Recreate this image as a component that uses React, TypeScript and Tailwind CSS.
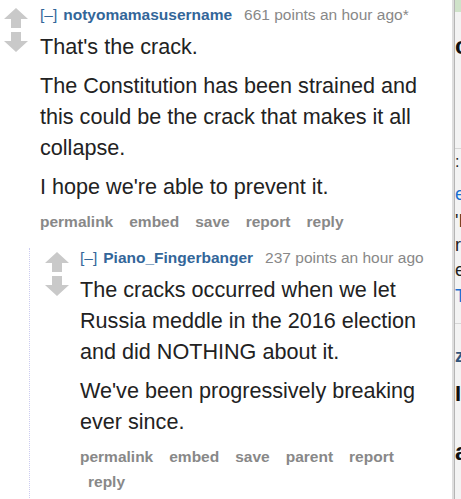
import React from 'react'

const font = { fontFamily: '"Liberation Sans", Arial, sans-serif' }

const Arrows: React.FC = () => (
  <div className="flex flex-col gap-[4px]">
    <svg width="24" height="20" viewBox="0 0 24 20">
      <path d="M12 0 L24 11 L17 11 L17 20 L7 20 L7 11 L0 11 Z" fill="#c9c9c9" />
    </svg>
    <svg width="24" height="20" viewBox="0 0 24 20">
      <path d="M12 20 L24 9 L17 9 L17 0 L7 0 L7 9 L0 9 Z" fill="#c9c9c9" />
    </svg>
  </div>
)

interface CommentProps {
  author: string
  meta: string
  paragraphs: string[]
  buttons: string[]
}

const CommentBody: React.FC<CommentProps> = ({ author, meta, paragraphs, buttons }) => (
  <div className="flex-1 min-w-0">
    <div className="text-[15.5px] leading-[20px] whitespace-nowrap">
      <span className="text-[#336699]">[–]</span>
      <span className="ml-[6px] font-bold text-[#336699]">{author}</span>
      <span className="ml-[12px] text-[#888888]">{meta}</span>
    </div>
    <div className="mt-[6px] text-[21.6px] leading-[31px] text-[#222222]">
      {paragraphs.map((p) => (
        <p key={p} className="mb-[8px] last:mb-0">
          {p}
        </p>
      ))}
    </div>
    <ul className="mt-[7px] flex flex-wrap text-[15.5px] leading-[25px] font-bold text-[#888888]">
      {buttons.map((b, i) => (
        <li key={b} className={i === 0 ? 'pr-[8px]' : 'px-[8px]'}>
          {b}
        </li>
      ))}
    </ul>
  </div>
)

export default function App() {
  return (
    <div className="flex w-[461px] h-[499px] overflow-hidden bg-white" style={font}>
      <div className="w-[452px] shrink-0 pt-[5px] pr-[14px]">
        <div className="flex">
          <div className="w-[40px] shrink-0 pl-[4px] pt-[3px]">
            <Arrows />
          </div>
          <CommentBody
            author="notyomamasusername"
            meta="661 points an hour ago*"
            paragraphs={[
              "That's the crack.",
              'The Constitution has been strained and this could be the crack that makes it all collapse.',
              "I hope we're able to prevent it.",
            ]}
            buttons={['permalink', 'embed', 'save', 'report', 'reply']}
          />
        </div>
        <div className="ml-[29px] mt-[14px] border-l border-dotted border-[#ccccf0] flex h-[300px]">
          <div className="w-[50px] shrink-0 pl-[15px] pt-[4px]">
            <Arrows />
          </div>
          <CommentBody
            author="Piano_Fingerbanger"
            meta="237 points an hour ago"
            paragraphs={[
              'The cracks occurred when we let Russia meddle in the 2016 election and did NOTHING about it.',
              "We've been progressively breaking ever since.",
            ]}
            buttons={['permalink', 'embed', 'save', 'parent', 'report', 'reply']}
          />
        </div>
      </div>
      <div className="w-[9px] shrink-0 border-l-2 border-[#dedede]">
        <div className="h-full border-l border-[#b5b5b5] bg-[#f3f3f3] overflow-hidden flex flex-col whitespace-nowrap">
          <div className="h-[12px] bg-[#cfe2c9] shrink-0" />
          <div className="mt-[24px] text-[24px] leading-[20px] font-bold text-[#111]">cc</div>
          <div className="mt-[92px] h-px bg-[#d6d6d6]" />
          <div className="mt-[6px] text-[16px] leading-[14px] text-[#222]">: </div>
          <div className="mt-[14px] text-[18px] leading-[22px] text-[#1a6fd0]">ee</div>
          <div className="mt-[4px] text-[18px] leading-[24px] text-[#222]">'I</div>
          <div className="text-[18px] leading-[24px] text-[#222]">re</div>
          <div className="text-[18px] leading-[26px] text-[#222]">e</div>
          <div className="text-[18px] leading-[26px] text-[#1a6fd0]">TI</div>
          <div className="mt-[14px] h-px bg-[#d6d6d6]" />
          <div className="mt-[22px] text-[18px] leading-[20px] font-bold text-[#33557a]">z</div>
          <div className="mt-[14px] text-[22px] leading-[28px] font-bold text-[#111]">I</div>
          <div className="mt-[30px] text-[24px] leading-[28px] font-bold text-[#111]">a</div>
        </div>
      </div>
    </div>
  )
}
